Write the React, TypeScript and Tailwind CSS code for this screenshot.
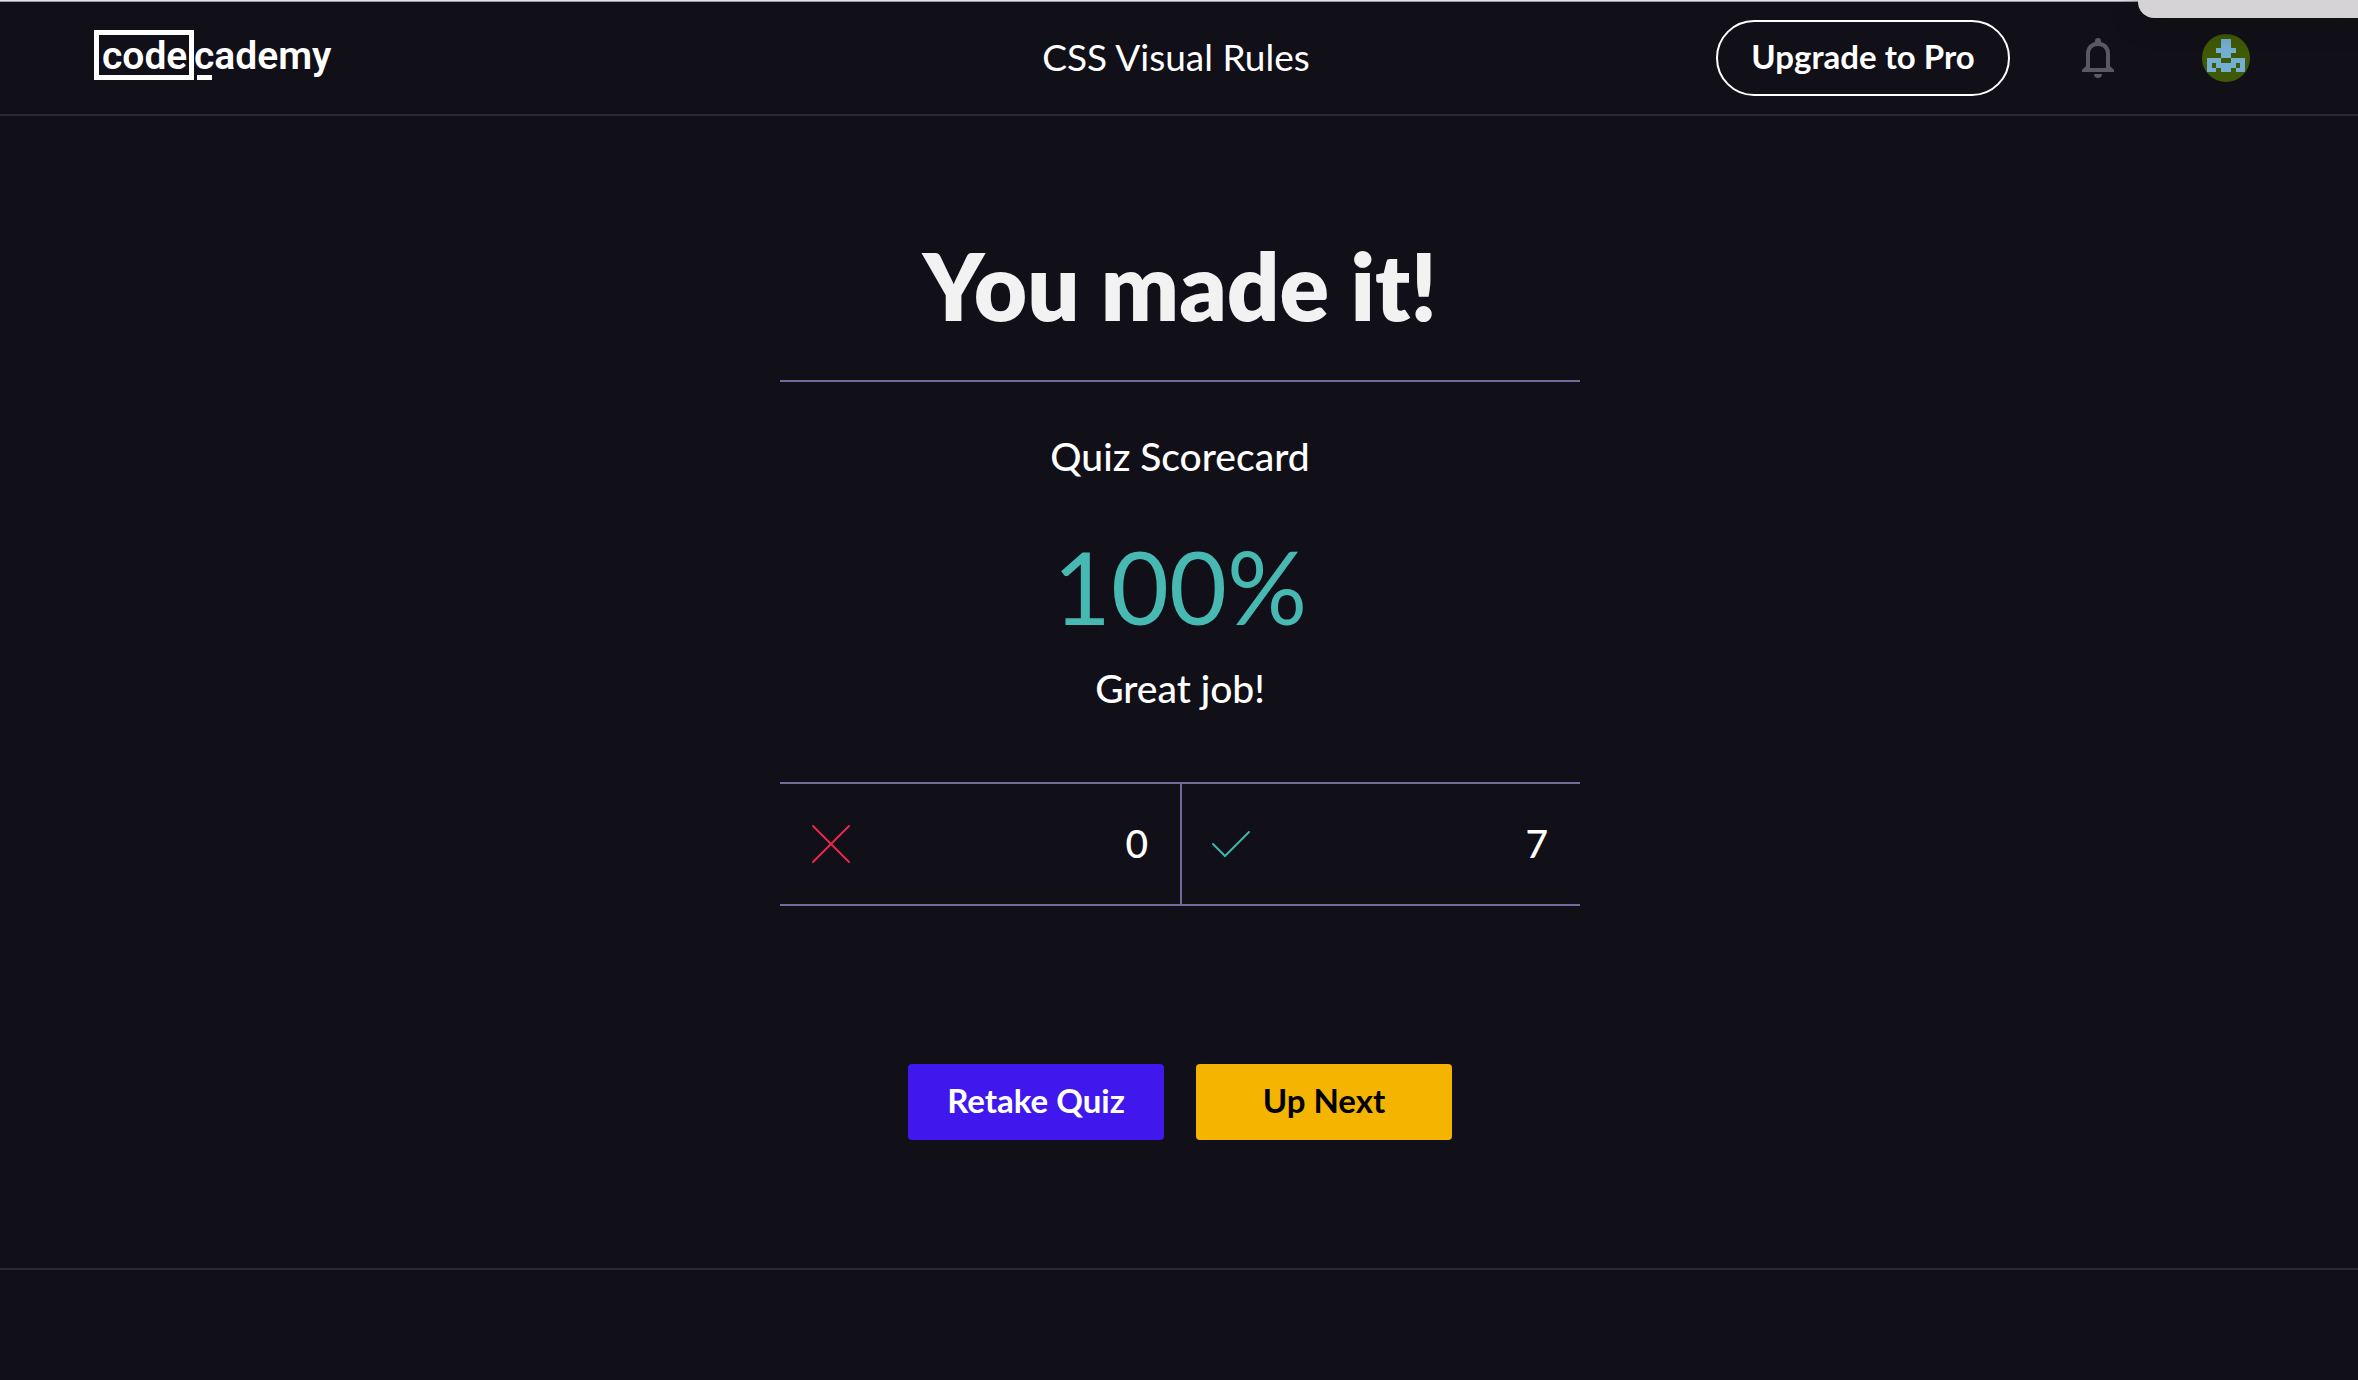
import React from 'react';

const AVATAR_CELLS = [
  [4, 1, 2, 2], [3, 3, 4, 1], [4, 4, 2, 1],
  [1, 5, 3, 1], [6, 5, 3, 1],
  [1, 6, 1, 1], [3, 6, 4, 1], [8, 6, 1, 1],
  [1, 7, 2, 1], [4, 7, 2, 1], [7, 7, 2, 1],
];

function Logo() {
  return (
    <a
      href="#"
      aria-label="codecademy"
      className="flex h-[50px] items-stretch font-[Roboto,sans-serif] text-[39px] leading-[42px] font-semibold text-white"
    >
      <span className="w-[100px] border-5 border-white pl-[3px]">code</span>
      <span className="relative pt-[5px] after:absolute after:bottom-0 after:left-[3px] after:h-[5px] after:w-[15px] after:bg-white">
        cademy
      </span>
    </a>
  );
}

function BellIcon() {
  return (
    <svg viewBox="0 0 32 40" className="h-10 w-8" fill="#5b595f" aria-hidden="true">
      <path
        fillRule="evenodd"
        d="M13 4V3a3 3 0 0 1 6 0v1C25 5.500 28 10 28 16V28L32 32V34H0V32L4 28V16C4 10 7 5.500 13 4ZM16 8C11 8 8 11 8 16V30H24V16C24 11 21 8 16 8Z"
      />
      <path d="M12 36H20C20 38.500 18.500 40 16 40S12 38.500 12 36Z" />
    </svg>
  );
}

function Avatar() {
  return (
    <svg viewBox="0 0 10 10" className="size-12 rounded-full" shapeRendering="crispEdges" aria-hidden="true">
      <rect width="10" height="10" fill="#3f5a05" />
      {AVATAR_CELLS.map(([x, y, w, h]) => (
        <rect key={`${x}-${y}`} x={x} y={y} width={w} height={h} fill="#75aed3" />
      ))}
    </svg>
  );
}

export default function App() {
  return (
    <div className="relative flex min-h-screen flex-col overflow-hidden bg-[#110f18] font-[Lato,sans-serif] text-white">
      <div className="h-0.5 border-b border-[#9b9b9f] bg-[#e4e4e6]" />
      <div className="absolute top-0 right-0 h-[18px] w-[220px] rounded-bl-2xl bg-[#d5d3d6] shadow-[0_4px_24px_rgba(18,18,18,0.9)]" />

      <header className="flex h-[114px] items-center border-b-2 border-[#2b2833] px-[94px]">
        <div className="flex flex-1 pb-1.5">
          <Logo />
        </div>
        <h2 className="pb-0.5 text-[37px] leading-[48px] font-normal">CSS Visual Rules</h2>
        <div className="flex flex-1 items-center justify-end pr-1.5">
          <button
            type="button"
            className="mr-[72px] h-[76px] w-[294px] rounded-full border-2 border-white pb-0.5 text-[33px] font-bold"
          >
            Upgrade to Pro
          </button>
          <button type="button" aria-label="Notifications" className="mr-[88px]">
            <BellIcon />
          </button>
          <button type="button" aria-label="Profile" className="mr-2">
            <Avatar />
          </button>
        </div>
      </header>

      <main className="flex flex-col items-center border-b-2 border-[#2b2833] pt-[114px] pb-32 pl-0.5 text-center">
        <div className="w-full max-w-[800px]">
          <h1 className="border-b-2 border-[#766a9c] pb-[38px] text-[92px] leading-[112px] font-extrabold text-[#f2f2f2]">
            You made it!
          </h1>
          <p className="mt-[50px] text-[39px] leading-[48px] font-medium">Quiz Scorecard</p>
          <p className="mt-[46px] text-[100px] leading-[120px] text-[#47b8b2]">100%</p>
          <p className="mt-[18px] text-[39px] leading-[48px] font-medium">Great job!</p>
          <div className="mt-[70px] flex border-y-2 border-[#766a9c] text-[39px] leading-[48px] font-medium">
            <div className="flex h-[120px] flex-1 items-center justify-between px-8">
              <svg viewBox="0 0 38 38" className="size-[38px]" stroke="#e8264a" strokeWidth="2" strokeLinecap="round" aria-label="Incorrect">
                <path d="M1 1L37 37M37 1L1 37" />
              </svg>
              <span className="pb-0.5">0</span>
            </div>
            <div className="flex h-[120px] flex-1 items-center justify-between border-l-2 border-[#766a9c] pr-8 pl-[30px]">
              <svg viewBox="0 0 38 38" className="size-[38px]" fill="none" stroke="#3eb5ab" strokeWidth="2" strokeLinecap="round" aria-label="Correct">
                <path d="M1 19L13 31L37 7" />
              </svg>
              <span className="pb-0.5">7</span>
            </div>
          </div>
        </div>
        <div className="mt-[158px] flex gap-8">
          <button type="button" className="h-[76px] w-64 rounded bg-[#4018ed] pb-0.5 text-[33px] font-bold">
            Retake Quiz
          </button>
          <button type="button" className="h-[76px] w-64 rounded bg-[#f5b400] pb-0.5 text-[33px] font-bold text-black">
            Up Next
          </button>
        </div>
      </main>
    </div>
  );
}
